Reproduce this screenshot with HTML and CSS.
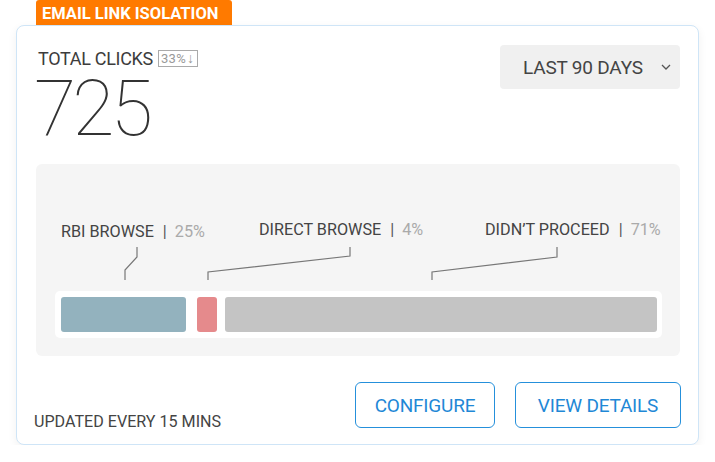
FILE: index.html
```html
<!DOCTYPE html>
<html>
<head>
<meta charset="utf-8">
<link rel="stylesheet" href="styles.css">
</head>
<body>
<div class="page">
  <div class="tab">EMAIL LINK ISOLATION</div>
  <div class="card">
    <div class="head">
      <div class="total">
        <div class="total-label">TOTAL CLICKS <span class="delta">33%<span class="arrow">↓</span></span></div>
        <div class="total-value">725</div>
      </div>
      <div class="select">LAST 90 DAYS
        <svg class="chev" width="10" height="6" viewBox="0 0 10 6"><path d="M1 1 L5 5 L9 1" fill="none" stroke="#555" stroke-width="1.3"/></svg>
      </div>
    </div>
    <div class="chart">
      <div class="labels">
        <div class="lab lab-rbi">RBI BROWSE<span class="sep">|</span><span class="pct">25%</span></div>
        <div class="lab lab-direct">DIRECT BROWSE<span class="sep">|</span><span class="pct">4%</span></div>
        <div class="lab lab-didnt">DIDN’T PROCEED<span class="sep">|</span><span class="pct">71%</span></div>
      </div>
      <svg class="leaders" width="643" height="34" viewBox="0 0 643 34">
        <g fill="none" stroke="#777" stroke-width="1.2">
          <path d="M101 0 V10 L89 23 V33"/>
          <path d="M314 0 V9 L172 25 V33"/>
          <path d="M521 0 V10 L396 25 V33"/>
        </g>
      </svg>
      <div class="track">
        <div class="seg seg-rbi"></div>
        <div class="seg seg-direct"></div>
        <div class="seg seg-didnt"></div>
      </div>
    </div>
    <div class="foot">
      <div class="updated">UPDATED EVERY 15 MINS</div>
      <div class="actions">
        <button class="btn btn-config">CONFIGURE</button>
        <button class="btn btn-details">VIEW DETAILS</button>
      </div>
    </div>
  </div>
</div>
</body>
</html>
```
FILE: styles.css
```css
* { box-sizing: border-box; }
body {
  margin: 0;
  background: #fff;
  font-family: Roboto, "Liberation Sans", sans-serif;
  color: #444;
}
.page {
  padding: 0 16px 0 16px;
  width: 715px;
}
.tab {
  margin-left: 20px;
  width: 196px;
  height: 26px;
  background: #ff7a00;
  color: #fff;
  font-weight: 700;
  font-size: 16.5px;
  line-height: 28px;
  padding-left: 6px;
  border-radius: 3px 3px 0 0;
}
.card {
  margin-top: -1px;
  width: 683px;
  height: 420px;
  border: 1.5px solid #cfe5f7;
  border-radius: 8px;
  background: #fff;
  box-shadow: 0 3px 10px rgba(0,0,0,0.06);
  padding: 19px 18px 0 19px;
  display: flex;
  flex-direction: column;
}
.head {
  display: flex;
  justify-content: space-between;
  align-items: flex-start;
  height: 119px;
}
.total { padding-left: 2px; padding-top: 3px; }
.total-label {
  font-size: 18px;
  line-height: 21px;
  color: #3c3c3c;
  display: flex;
  align-items: center;
  letter-spacing: -0.3px;
}
.delta {
  margin-left: 5px;
  border: 1px solid #aaa;
  color: #999;
  font-size: 13px;
  line-height: 14px;
  padding: 0 3px 0 2px;
  letter-spacing: 0.3px;
}
.arrow { font-size: 14px; margin-left: 1px; }
.total-value {
  font-size: 77px;
  font-weight: 100;
  line-height: 60px;
  margin-top: 10px;
  color: #333;
  margin-left: -4px;
  letter-spacing: -3.8px;
}
.select {
  width: 180px;
  height: 44px;
  background: #f0f0f0;
  border-radius: 4px;
  font-size: 19px;
  color: #444;
  display: flex;
  align-items: center;
  padding-left: 23px;
  letter-spacing: -0.2px;
}
.chev { margin-left: 18px; }
.chart {
  background: #f5f5f5;
  border-radius: 6px;
  height: 192px;
  padding: 56px 17px 0 19px;
}
.labels {
  position: relative;
  height: 27px;
  font-size: 16.2px;
  color: #444;
}
.lab { position: absolute; top: 0; white-space: nowrap; }
.lab-rbi { left: 6px; top: 2px; }
.lab-direct { left: 204px; }
.lab-didnt { left: 430px; }
.sep { margin: 0 8px 0 9px; color: #555; }
.pct { color: #aaa; }
.leaders {
  display: block;
  margin-left: -19px;
}
.track {
  margin-top: 10px;
  width: 607px;
  height: 47px;
  background: #fff;
  border-radius: 5px;
  display: flex;
  padding: 6px 5px 6px 6px;
}
.seg { height: 35px; border-radius: 3px; }
.seg-rbi { width: 125px; background: #93b2be; }
.seg-direct { width: 20px; background: #e58a8c; margin-left: 11px; }
.seg-didnt { flex: 1; background: #c4c4c4; margin-left: 8px; }
.foot {
  display: flex;
  justify-content: space-between;
  align-items: flex-end;
  margin-top: 26px;
}
.updated {
  font-size: 16.1px;
  color: #444;
  margin-left: -2px;
  margin-bottom: -3px;
}
.actions { display: flex; gap: 20px; margin-right: -1px; }
.btn {
  height: 46px;
  background: #fff;
  border: 1.5px solid #2590db;
  border-radius: 6px;
  color: #1f88d6;
  font-family: Roboto, "Liberation Sans", sans-serif;
  font-size: 19px;
  letter-spacing: -0.2px;
}
.btn-config { width: 140px; }
.btn-details { width: 166px; }
```
